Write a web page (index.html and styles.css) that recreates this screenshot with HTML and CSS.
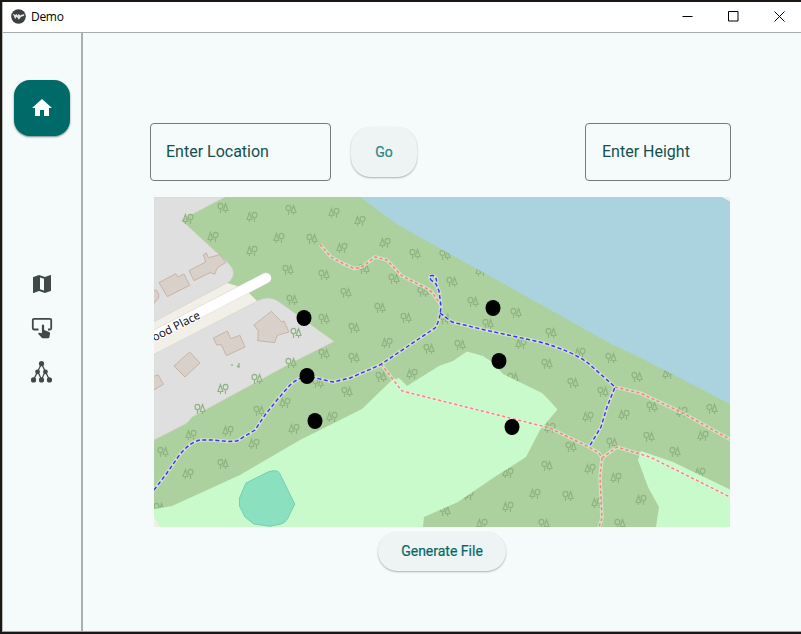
FILE: index.html
```html
<!DOCTYPE html>
<html lang="en">
<head>
<meta charset="utf-8">
<title>Demo</title>
<link rel="stylesheet" href="styles.css">
</head>
<body>
<div class="window">
  <header class="titlebar">
    <svg class="app-icon" viewBox="0 0 15 15"><circle cx="7.5" cy="7.5" r="7.3" fill="#3d4144"/><path d="M1.800 4.800l2.400 5.200 1.600-2.300 2 3 2.400-3 2.600-.8.8-1.700-2.500.2-2 1.100-1.300-1.800-1.200 1.900-1.400-1.900-.8 1.300z" fill="#e4e6e6"/></svg>
    <span class="title">Demo</span>
    <div class="controls">
      <svg viewBox="0 0 11 11"><path d="M.5 5.5h10"/></svg>
      <svg viewBox="0 0 11 11"><path d="M.5 .5h9.5v9.5H.5z"/></svg>
      <svg viewBox="0 0 11 11"><path d="M.5.5l10 10M10.5.5l-10 10"/></svg>
    </div>
  </header>
  <div class="body">
    <nav class="rail">
      <button class="home" aria-label="Home"><svg viewBox="0 0 24 24"><path d="M10 20v-6h4v6h5v-8h3L12 3 2 12h3v8z"/></svg></button>
      <div class="rail-items">
        <svg viewBox="0 0 24 24"><path d="M20.5 3l-.16.03L15 5.100 9 3 3.360 4.900c-.21.07-.36.25-.36.480V20.500a.5.5 0 0 0 .5.5l.16-.03L9 18.900l6 2.100 5.640-1.900c.21-.07.36-.25.36-.480V3.500a.5.5 0 0 0-.5-.5zM10 5.470l4 1.400v11.660l-4-1.400z"/></svg>
        <svg viewBox="0 0 24 24"><path d="M8.500 13.500H4a1.200 1.200 0 0 1-1.200-1.200V4A1.200 1.200 0 0 1 4 2.800h16A1.200 1.200 0 0 1 21.200 4v8.300a1.200 1.200 0 0 1-1.200 1.200h-2" fill="none" stroke="#3f4948" stroke-width="1.800"/><path d="M11.900 9.500a1.100 1.100 0 0 1 2.200 0v4.500l5 1.900c.7.300 1 .8 1 1.500l-.7 3.500c-.2.900-.8 1.400-1.600 1.400h-4.600c-.6 0-1-.2-1.400-.6L8 17.800l.7-.8c.3-.3.700-.4 1.100-.3l2.100.500z"/></svg>
        <svg viewBox="0 0 24 24"><path d="M12 4L3.800 20.500M12 4l8.200 16.500M8.200 12l3.800 8.500M15.800 12L12 20.500" fill="none" stroke="#3f4948" stroke-width="1.300"/><circle cx="12" cy="3.800" r="2.700"/><circle cx="7.900" cy="12.300" r="2.500"/><circle cx="16.100" cy="12.300" r="2.500"/><circle cx="3.700" cy="20.800" r="2.700"/><circle cx="12" cy="20.800" r="2.700"/><circle cx="20.300" cy="20.800" r="2.700"/></svg>
      </div>
    </nav>
    <main class="content">
      <div class="form">
        <div class="field location"><span>Enter Location</span></div>
        <button class="pill go">Go</button>
        <div class="field height"><span>Enter Height</span></div>
      </div>
      <svg class="map" viewBox="154 197 576 330">
        <defs>
          <path id="red" d="M320 244.500L331 257 343 263.500 354 268.500Q361 268 366 264L375 257 387 260 402 276 420 285Q431 290 434 295L441 305M381 364L402 391 550 428 566 436 589 447 599 453 602 458 600 477 602 518 599 527M602 458L617 447 650 457 730 497M615 387L640 393 683 413 730 439.500"/>
          <path id="blue" d="M154 490L167 473 178 457Q188 443 200 440L212 440 228 441.500 237 441 255 430 265 415 277 400 290 385Q298 378 307 376L333 382 350 378 380 365 435 328Q440 321 441 306L439 291 436 284 431 280Q428 275 433 275.500 438 278 436 285M440 313L452 322 485 330 540 342Q572 351 588 363L615 387 607 407 601 427 589 447"/>
        </defs>
        <rect x="154" y="197" width="576" height="330" fill="#add19e"/>
        <g class="estate">
          <path d="M154 197H225L181.300 220 230 265Q235 271 232.500 277 231 281 227 283L154 322z"/>
          <path d="M154 354L257 301Q269 295 279 302L334 341.500 293 362 192 417 187 423 154 440z"/>
        </g>
        <path fill="#f2efe9" d="M154 322L227.300 283 237 286 249 293 257 301 154 354z"/>
        <g class="buildings" transform="translate(154 196) scale(.33333)">
          <path d="M15 260L65 233 72 243 90 234 107 268 40 302z"/>
          <path d="M105 224L155 198 148 176 157 171 163 185 198 176 215 200 190 215 182 235 168 230 120 254z"/>
          <path d="M-5 283H8L14 295V305L0 322z"/>
          <path d="M178 426L220 405 230 428 258 418 273 453 217 479 202 446 188 447z"/>
          <path d="M352 346L383 378 390 375 405 408 370 418 362 440 311 434 313 405 300 387z"/>
          <path d="M60 510L107 468 138 501 93 543z"/>
          <path d="M-5 542L13 537 28 565 -5 585z"/>
        </g>
        <path d="M148 339L266 278" stroke="#d4d0cb" stroke-width="11" stroke-linecap="round"/>
        <path d="M148 339L266 278" stroke="#fff" stroke-width="10.200" stroke-linecap="round"/>
        <text class="street" transform="translate(154.500 341.500) rotate(-27)">ood Place</text>
        <g id="trees" class="trees"></g>
        <path class="scrub" d="M232 364v2M237 367l2-2M239 363v5"/>
        <path fill="#aad3df" d="M360 197L398 225 540 304 613 345 618 347 645 360 730 404V197z"/>
        <path fill="#f2efe9" d="M722 197H730V201.500z"/>
        <path fill="#c8facc" d="M154 509L172 506 240 475 300 440 350 415 362 409 392 380 399 378 407 386 439 366 453 361 467 351.500 483 356 492 362 503 374 542 393 549 400 557.500 409.500 540 430 526 457 493 478 458 502 424 517 423 527H154z"/>
        <path fill="#c8facc" d="M641 451L673 462 730 489.500V527H656L659 507 648 487 638 460z"/>
        <path fill="#f2efe9" d="M154 517L160 527H154z"/>
        <path fill="#8be0c0" stroke="#75cdb3" d="M246 483L268 472Q277 469 279.500 473L294.700 504 288 518Q285 523 281 524L270 526.300 254 524 245 517 239.500 506V498z"/>
        <g class="casing"><use href="#blue"/><use href="#red"/></g>
        <use class="red" href="#red"/>
        <use class="blue" href="#blue"/>
        <g fill="#000">
          <ellipse cx="304" cy="318" rx="7.500" ry="8"/><ellipse cx="493" cy="308" rx="7.500" ry="8"/><ellipse cx="499" cy="361" rx="7.500" ry="8"/><ellipse cx="307" cy="376" rx="7.500" ry="8"/><ellipse cx="315" cy="421" rx="7.500" ry="8"/><ellipse cx="512" cy="427" rx="7.500" ry="8"/>
        </g>
      </svg>
      <button class="pill generate">Generate File</button>
    </main>
  </div>
</div>
<script src="trees.js"></script>
</body>
</html>
```
FILE: trees.js
```js
// Woodland symbols: a broadleaf tree beside a conifer; "mirrored" ones put the conifer first.
const regular = [[223,208],[291,210],[312,239],[288,270],[324,275],[346,293],[292,300],[324,319],[296,333],[354,328],[324,354],[291,363],[354,358],[415,254],[445,255],[364,269],[394,279],[452,282],[423,292],[473,302],[380,308],[516,313],[445,319],[406,318],[488,324],[551,333],[429,349],[460,345],[547,364],[611,358],[257,379],[200,409],[259,411],[318,383],[347,392],[163,452],[223,464],[159,508],[381,377],[513,378],[547,466],[445,511],[544,524],[573,383],[603,392],[637,377],[652,407],[712,409],[649,437],[612,443],[571,447],[675,452],[568,496],[620,524]];
const mirrored = [[188,219],[252,217],[334,213],[213,237],[279,238],[342,248],[252,251],[360,221],[385,243],[481,271],[387,343],[521,344],[580,353],[223,389],[285,403],[332,417],[294,429],[228,431],[191,435],[254,444],[188,474],[412,374],[508,473],[535,494],[508,507],[482,524],[468,495],[668,374],[682,412],[588,417],[624,415],[703,436],[550,428],[590,469],[616,478],[700,473],[597,503],[641,500]];
const shape = "M-2.500 5V.800M-2.500 .800C-5.800 .3 -5.800 -4.600 -2.500 -4.700C.6 -4.600 .6 .3 -2.500 .800M2.600 5V2.500M2.600 -4.500L.2 2.500H5Z";
const layer = document.getElementById("trees");
function plant(points, flip) {
  for (const [x, y] of points) {
    const p = document.createElementNS("http://www.w3.org/2000/svg", "path");
    p.setAttribute("d", shape);
    p.setAttribute("transform", `translate(${x} ${y}) scale(${flip} 1)`);
    layer.appendChild(p);
  }
}
plant(regular, 1);
plant(mirrored, -1);
```
FILE: styles.css
```css
* { box-sizing: border-box; }
body {
  margin: 0;
  height: 634px;
  padding: 2px 0 2px 2px;
  background: #1c1712;
  font-family: Roboto, sans-serif;
  overflow: hidden;
}
button { border: 0; font-family: inherit; padding: 0; }
.window {
  height: 630px;
  display: flex;
  flex-direction: column;
  background: #f4fbfa;
  border-left: 1px solid #b5baba;
  border-bottom: 1px solid #9da3a3;
}
.titlebar {
  height: 31px;
  flex: none;
  display: flex;
  align-items: center;
  background: #fff;
  border-bottom: 1px solid #a7adad;
  padding: 0 16px 2px 8px;
}
.app-icon { width: 15px; height: 15px; }
.title {
  font: 12px/16px "Open Sans", sans-serif;
  letter-spacing: -.3px;
  color: #000;
  margin: 2px 0 0 5px;
}
.controls { margin-left: auto; display: flex; gap: 35px; }
.controls svg { width: 11px; height: 11px; fill: none; stroke: #000; stroke-width: 1; }
.body { flex: 1; display: flex; min-height: 0; }
.rail {
  width: 80px;
  border-right: 2px solid #a9afaf;
  padding-top: 47px;
  display: flex;
  flex-direction: column;
  align-items: center;
}
.home {
  width: 56px;
  height: 56px;
  border-radius: 16px;
  background: #006a69;
  box-shadow: 0 1px 2px rgba(0, 50, 50, .55);
  display: grid;
  place-items: center;
}
.home svg { width: 24px; height: 24px; fill: #fff; }
.rail-items { margin-top: 136px; display: flex; flex-direction: column; gap: 20px; }
.rail-items svg { width: 24px; height: 24px; fill: #3f4948; }
.rail-items svg:last-child { width: 23px; height: 23px; }
.content {
  flex: 1;
  padding: 90px 70px 0 67px;
  display: flex;
  flex-direction: column;
}
.form { display: flex; align-items: center; height: 58px; }
.field {
  height: 58px;
  border: 1px solid #727c7b;
  border-radius: 4px;
  padding-left: 15px;
  display: flex;
  align-items: center;
  font-size: 16px;
  color: #15504f;
}
.field span { margin-top: -2px; }
.location { width: 181px; }
.height { width: 146px; margin-left: auto; padding-left: 16px; }
.pill {
  background: #eef3f3;
  color: #006a69;
  font-size: 14px;
  font-weight: 400;
  -webkit-text-stroke: .2px currentColor;
  box-shadow: 0 1px 2px rgba(0, 0, 0, .3);
}
.go { width: 66px; height: 50px; border-radius: 20px; margin-left: 20px; color: #2a8583; }
.map { width: 576px; height: 330px; margin: 16px 0 0 4px; flex: none; }
.generate { width: 128px; height: 39px; border-radius: 20px; margin: 5px 0 0 228px; padding-bottom: 1px; }
.estate path { fill: #e0dfdf; stroke: #d2d0ce; stroke-width: .5; }
.buildings path { fill: #d9d0c9; stroke: #c3aea1; stroke-width: 2.600; }
.street { font: 11.500px "Noto Sans", sans-serif; fill: #111; stroke: #fff; stroke-width: 2; paint-order: stroke; }
.trees path, .scrub { fill: none; stroke: #8fb481; stroke-width: 1.200; }
.casing { fill: none; stroke: #f3eeec; stroke-width: 3.600; opacity: .5; stroke-linejoin: round; }
.red, .blue { fill: none; stroke-width: 1.400; }
.red { stroke: #fa8072; stroke-dasharray: 3 2.500; }
.blue { stroke: #3434fa; stroke-dasharray: 4 2.500; }
```
